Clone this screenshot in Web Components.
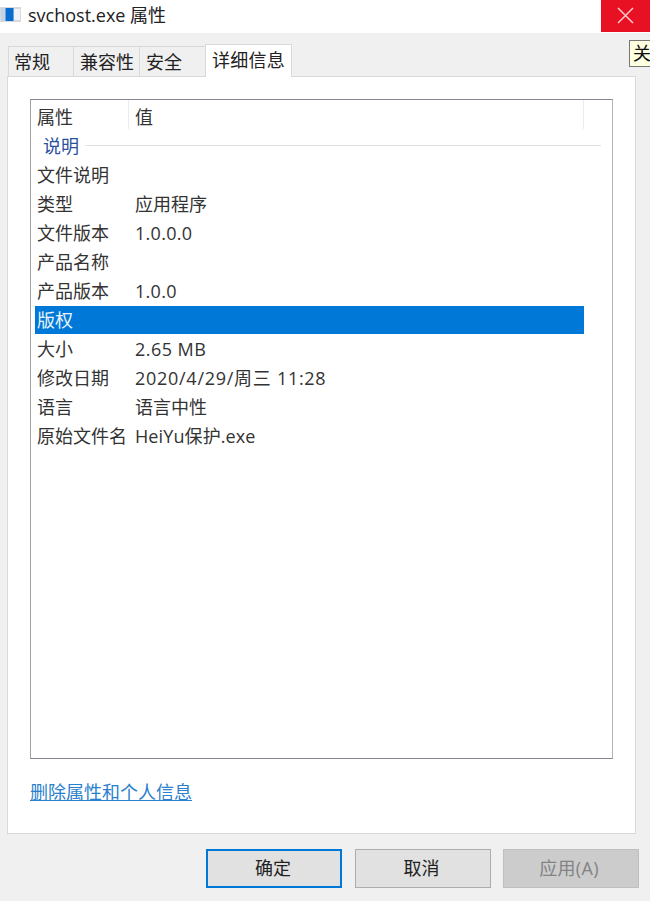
<!DOCTYPE html>
<html lang="zh">
<head>
<meta charset="utf-8">
<title>svchost.exe 属性</title>
<style>
  html, body { margin: 0; padding: 0; background: #f0f0f0; }
  body { font: 18px "Noto Sans CJK SC", "Open Sans", sans-serif; }
</style>
</head>
<body>
<prop-dialog>
  <title-bar slot="title">svchost.exe 属性</title-bar>
  <tab-strip slot="tabs"></tab-strip>
  <detail-list slot="list"></detail-list>
  <dlg-button slot="buttons" kind="default">确定</dlg-button>
  <dlg-button slot="buttons">取消</dlg-button>
  <dlg-button slot="buttons" kind="disabled">应用(A)</dlg-button>
</prop-dialog>

<script>
(function () {
  "use strict";

  var FONT = '"Open Sans", "Noto Sans CJK SC", sans-serif';

  function shadow(el, html) {
    el.attachShadow({ mode: "open" }).innerHTML = html;
  }

  class TitleBar extends HTMLElement {
    connectedCallback() {
      shadow(this,
        "<style>" +
        ":host{display:flex;align-items:flex-start;height:33px;background:#fff;position:relative;" +
        "font:18px/30px " + FONT + ";color:#222}" +
        "svg{display:block;margin:7px 7px 0 0;flex:none}" +
        ".x{position:absolute;top:0;right:0;width:49px;height:32px;background:#e81123}" +
        ".x svg{position:absolute;left:16px;top:7px;margin:0}" +
        "</style>" +
        '<svg width="21" height="15" viewBox="0 0 21 15">' +
        '<rect width="21" height="15" fill="#d6d9de"/>' +
        '<rect x="1" y="1" width="4" height="13" fill="#c3d4e6"/>' +
        '<rect x="5.500" y="1" width="8" height="13" fill="#0a6ed1"/>' +
        '<rect x="14" y="2" width="6" height="11" fill="#f1f3f6"/></svg>' +
        "<slot></slot>" +
        '<div class="x"><svg width="17" height="17" viewBox="0 0 17 17">' +
        '<path d="M1 1L16 16M16 1L1 16" stroke="#fbc9ce" stroke-width="1.500" fill="none"/></svg></div>');
    }
  }

  class TabStrip extends HTMLElement {
    connectedCallback() {
      var tabs = [["常规", 65, 5], ["兼容性", 66, 6], ["安全", 66, 6], ["详细信息", 87, 6]];
      shadow(this,
        "<style>" +
        ":host{display:flex;align-items:flex-end;height:43px;box-sizing:border-box;padding-left:8px;" +
        "font:18px " + FONT + ";color:#222;position:relative;z-index:1}" +
        ".t{box-sizing:border-box;height:30px;line-height:31px;background:#f0f0f0;" +
        "border:1px solid #d9d9d9;border-bottom:0;border-right:0;white-space:nowrap}" +
        ".t.on{background:#fff;border-right:1px solid #d9d9d9;line-height:31px;" +
        "margin-bottom:-1px;height:33px;letter-spacing:.25px}" +
        "</style>" +
        tabs.map(function (t, i) {
          return '<div class="t' + (i === 3 ? " on" : "") + '" style="width:' + t[1] + "px;padding-left:" + t[2] + 'px">' + t[0] + "</div>";
        }).join(""));
    }
  }

  class DetailList extends HTMLElement {
    connectedCallback() {
      // third column: letter spacing for the latin values, which run wider in the reference
      var rows = [
        ["文件说明", ""],
        ["类型", "应用程序"],
        ["文件版本", "1.0.0.0", 0.3],
        ["产品名称", ""],
        ["产品版本", "1.0.0", 0.3],
        ["版权", "", 0, true],
        ["大小", "2.65 MB", 0.45],
        ["修改日期", "2020/4/29/周三 11:28", 0.72],
        ["语言", "语言中性"],
        ["原始文件名", "HeiYu保护.exe", 0.1]
      ];
      shadow(this,
        "<style>" +
        ":host{display:block;box-sizing:border-box;height:660px;width:583px;background:#fff;" +
        "border:1px solid;border-color:#828790 #b5b5b5 #828790 #a0a0a0;font:18px " + FONT + ";color:#333}" +
        ".head,.row{display:grid;grid-template-columns:98px 1fr;width:553px;height:29px;line-height:29px}" +
        ".head{height:31px}" +
        ".head span{padding-left:6px;height:29px;line-height:35px}" +
        ".head span+span{border-left:1px solid #ececec;border-right:1px solid #ececec;margin-left:-1px;padding-left:6px}" +
        ".row span{padding-left:6px;white-space:nowrap}" +
        ".sel{color:#e8f3fb;background:linear-gradient(#0078d7,#0078d7) 4px 0/549px 28px no-repeat}" +
        ".group{display:flex;align-items:center;box-sizing:border-box;height:30px;padding:0 11px 2px 12px;color:#2a4f9e}" +
        ".group i{flex:1;height:1px;background:#e2e2e2;margin-left:6px}" +
        "</style>" +
        '<div class="head"><span>属性</span><span>值</span></div>' +
        '<div class="group">说明<i></i></div>' +
        rows.map(function (r) {
          return '<div class="row' + (r[3] ? " sel" : "") + '"><span>' + r[0] +
            '</span><span style="letter-spacing:' + (r[2] || 0) + 'px">' + r[1] + "</span></div>";
        }).join(""));
    }
  }

  class DlgButton extends HTMLElement {
    connectedCallback() {
      shadow(this,
        "<style>" +
        ":host{display:flex;align-items:center;justify-content:center;box-sizing:border-box;width:136px;height:39px;" +
        "padding:0 2px 3px 0;background:#e1e1e1;border:1px solid #adadad;color:#222;font:18px " + FONT + "}" +
        ':host([kind="default"]){border:2px solid #0078d7}' +
        ':host([kind="disabled"]){background:#ccc;border-color:#bfbfbf;color:#838383;letter-spacing:.3px;padding-right:4px}' +
        "</style><slot></slot>");
    }
  }

  class PropDialog extends HTMLElement {
    connectedCallback() {
      shadow(this,
        "<style>" +
        ":host{display:block;width:650px;height:901px;background:#f0f0f0;position:relative;overflow:hidden}" +
        ".pane{box-sizing:border-box;margin-left:7px;width:629px;height:758px;background:#fff;" +
        "border:1px solid #d9d9d9;padding:22px 0 0 22px}" +
        ".link{margin-top:18px;font:18px/30px " + FONT + ";color:#2a7fce;text-decoration:underline}" +
        ".btns{display:flex;gap:12.500px;justify-content:flex-end;margin:15px 11px 0 0}" +
        ".tip{position:absolute;left:629px;top:40px;width:40px;height:27px;box-sizing:border-box;" +
        "background:#ffffe1;border:1px solid #767676;font:18px/25px " + FONT + ";color:#111;padding-left:3px}" +
        "</style>" +
        '<slot name="title"></slot><slot name="tabs"></slot>' +
        '<div class="pane"><slot name="list"></slot><div class="link">删除属性和个人信息</div></div>' +
        '<div class="btns"><slot name="buttons"></slot></div>' +
        '<div class="tip">关</div>');
    }
  }

  customElements.define("title-bar", TitleBar);
  customElements.define("tab-strip", TabStrip);
  customElements.define("detail-list", DetailList);
  customElements.define("dlg-button", DlgButton);
  customElements.define("prop-dialog", PropDialog);
})();
</script>
</body>
</html>
